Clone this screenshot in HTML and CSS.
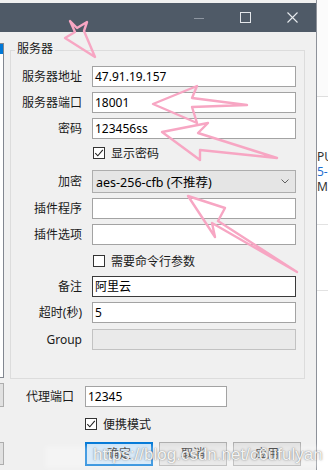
FILE: index.html
```html
<!DOCTYPE html>
<html lang="zh-CN">
<head>
    <meta charset="UTF-8">
    <meta name="viewport" content="width=device-width, initial-scale=1.0">
    <title>编辑服务器</title>
    <link rel="stylesheet" href="styles.css">
</head>
<body>
    <div class="screen">
        <div class="dialog">
            <div class="titlebar">
                <span class="tb-btn">
                    <svg width="10" height="10" viewBox="0 0 10 10"><line x1="0" y1="5.5" x2="10" y2="5.5" stroke="#8e96a1" stroke-width="1"/></svg>
                </span>
                <span class="tb-btn">
                    <svg width="11" height="11" viewBox="0 0 11 11"><rect x="0.5" y="0.5" width="10" height="10" fill="none" stroke="#e3e6ea" stroke-width="1"/></svg>
                </span>
                <span class="tb-btn">
                    <svg width="11" height="11" viewBox="0 0 11 11"><path d="M0.5 0.5 L10.5 10.5 M10.5 0.5 L0.5 10.5" stroke="#e8ebee" stroke-width="1.1"/></svg>
                </span>
            </div>

            <div class="dialog-body">
                <div class="left-col">
                    <div class="server-list"><div class="list-sel"></div></div>
                    <div class="left-btn first"></div>
                    <div class="left-btn second"></div>
                </div>

                <div class="main">
                    <div class="group">
                        <div class="group-title">服务器</div>

                        <div class="row first">
                            <span class="label">服务器地址</span>
                            <div class="field">47.91.19.157</div>
                        </div>
                        <div class="row">
                            <span class="label">服务器端口</span>
                            <div class="field">18001</div>
                        </div>
                        <div class="row">
                            <span class="label">密码</span>
                            <div class="field">123456ss</div>
                        </div>
                        <div class="check-row in-group">
                            <span class="checkbox">
                                <svg width="10" height="10" viewBox="0 0 10 10"><path d="M1.3 5.2 L3.8 7.8 L8.8 1.8" fill="none" stroke="#222" stroke-width="1.1"/></svg>
                            </span>
                            <span>显示密码</span>
                        </div>
                        <div class="row combo-row">
                            <span class="label">加密</span>
                            <div class="combo">
                                <span>aes-256-cfb (不推荐)</span>
                                <svg width="8" height="5" viewBox="0 0 8 5"><polyline points="0.5,0.5 4,4 7.5,0.5" fill="none" stroke="#606060" stroke-width="1"/></svg>
                            </div>
                        </div>
                        <div class="row">
                            <span class="label">插件程序</span>
                            <div class="field"></div>
                        </div>
                        <div class="row">
                            <span class="label">插件选项</span>
                            <div class="field"></div>
                        </div>
                        <div class="check-row in-group second">
                            <span class="checkbox"></span>
                            <span>需要命令行参数</span>
                        </div>
                        <div class="row after-check">
                            <span class="label">备注</span>
                            <div class="field focused">阿里云</div>
                        </div>
                        <div class="row">
                            <span class="label">超时(秒)</span>
                            <div class="field">5</div>
                        </div>
                        <div class="row last">
                            <span class="label">Group</span>
                            <div class="field disabled"></div>
                        </div>
                    </div>

                    <div class="row proxy">
                        <span class="label">代理端口</span>
                        <div class="field">12345</div>
                    </div>
                    <div class="check-row portable">
                        <span class="checkbox">
                            <svg width="10" height="10" viewBox="0 0 10 10"><path d="M1.3 5.2 L3.8 7.8 L8.8 1.8" fill="none" stroke="#222" stroke-width="1.1"/></svg>
                        </span>
                        <span>便携模式</span>
                    </div>
                    <div class="buttons">
                        <div class="btn default">确定</div>
                        <div class="btn">取消</div>
                        <div class="btn">应用</div>
                    </div>
                </div>
            </div>
        </div>

        <div class="side">
            <div class="side-head"></div>
            <div class="side-text">
                <div>PU</div>
                <div class="blue">5-</div>
                <div>Mb</div>
            </div>
            <div class="side-line one"></div>
            <div class="side-line two"></div>
        </div>
    </div>

    <!-- hand drawn arrows on top of the screenshot -->
    <svg class="marks" width="328" height="475" viewBox="0 0 328 475">
        <g fill="none" stroke="#f7a6c3" stroke-width="2.4" stroke-linejoin="round" stroke-linecap="round">
            <polygon points="70,21 77,28 87,22 84,31 95,57 65,38 75,32"/>
            <polygon points="153,104 197,86 192,98 247,105 192,107 197,123"/>
            <polygon points="162,132 208,123 198,133 277,158 200,150 200,160"/>
            <polygon points="188,196 225,208 218,221 297,272 212,223 215,237"/>
        </g>
    </svg>

    <div class="wm-band"></div>
    <div class="watermark">https://blog.csdn.net/c6ufulyan</div>
</body>
</html>
```

FILE: styles.css
```css
* {
    box-sizing: border-box;
}

body {
    margin: 0;
    padding: 0;
    width: 328px;
    height: 475px;
    overflow: hidden;
    position: relative;
    background: #ffffff;
    font-family: "Noto Sans", "Noto Sans CJK SC", sans-serif;
    font-size: 12px;
    color: #1a1a1a;
}

.screen {
    display: flex;
    height: 470px;
}

/* the settings window */
.dialog {
    width: 317px;
    padding-top: 3px;
    border-right: 1px solid #8d9199;
    background: #f0f0f0;
    display: flex;
    flex-direction: column;
}

.titlebar {
    height: 29px;
    background: #4f5a67;
    display: flex;
    justify-content: flex-end;
}

.tb-btn {
    width: 47px;
    height: 29px;
    display: flex;
    align-items: center;
    justify-content: center;
}

.dialog-body {
    flex: 1;
    display: flex;
}

/* cut off server list on the left */
.left-col {
    width: 4px;
}

.server-list {
    margin-top: 11px;
    height: 335px;
    background: #ffffff;
    border: 1px solid #828790;
    border-left: none;
}

.list-sel {
    width: 3px;
    height: 10px;
    background: #0078d7;
}

.left-btn {
    height: 24px;
    background: #e1e1e1;
    border: 1px solid #adadad;
    border-left: none;
}

.left-btn.first {
    margin-top: 5px;
}

.left-btn.second {
    margin-top: 35px;
    height: 23px;
}

.main {
    flex: 1;
}

.group {
    width: 295px;
    margin: 18px 0 0 6px;
    padding: 0 8px 28px 6px;
    border: 1px solid #dcdcdc;
}

.group-title {
    width: fit-content;
    margin: -10px 0 0 -2px;
    padding: 0 2px;
    line-height: 16px;
    background: #f0f0f0;
}

.row {
    display: flex;
    align-items: center;
    height: 21px;
    margin-top: 5px;
}

.row.first {
    margin-top: 9px;
}

.row.combo-row {
    height: 23px;
    margin-top: 8px;
}

.row.after-check {
    margin-top: 6px;
}

.row.last {
    margin-top: 6px;
}

.label {
    width: 65px;
    margin-right: 10px;
    text-align: right;
    white-space: nowrap;
    line-height: 21px;
}

.field {
    width: 204px;
    height: 21px;
    padding: 0 2px;
    border: 1px solid #a3a3a3;
    background: #ffffff;
    color: #000000;
    line-height: 19px;
    white-space: nowrap;
}

.field.focused {
    border-color: #3a3a3a;
}

.field.disabled {
    background: #eaeaea;
    border-color: #c2c2c2;
}

.combo {
    width: 204px;
    height: 23px;
    padding: 0 6px 0 3px;
    border: 1px solid #adadad;
    background: #e5e5e5;
    color: #000000;
    font-size: 12.5px;
    display: flex;
    align-items: center;
    justify-content: space-between;
}

.check-row {
    display: flex;
    align-items: center;
    height: 18px;
}

.check-row.in-group {
    margin: 5px 0 0 76px;
}

.check-row.in-group.second {
    margin-top: 7px;
}

.checkbox {
    width: 12px;
    height: 12px;
    margin-right: 6px;
    border: 1px solid #333333;
    background: #ffffff;
    display: flex;
    align-items: center;
    justify-content: center;
}

/* below the group box */
.row.proxy {
    margin: 7px 0 0 6px;
}

.row.proxy .label {
    width: 64px;
    margin-right: 11px;
}

.row.proxy .field {
    width: 142px;
}

.check-row.portable {
    margin: 8px 0 0 81px;
}

.buttons {
    display: flex;
    gap: 6px;
    margin: 9px 0 0 81px;
}

.btn {
    width: 68px;
    height: 24px;
    border: 1px solid #adadad;
    background: #e1e1e1;
    text-align: center;
    line-height: 22px;
}

.btn.default {
    border: 2px solid #0078d7;
    background: #cce4f7;
    line-height: 20px;
}

/* window behind, on the right */
.side {
    flex: 1;
    background: #ffffff;
    overflow: hidden;
}

.side-head {
    height: 97px;
    background: #fbfbfb;
    border-bottom: 1px solid #dedede;
}

.side-text {
    margin-top: 52px;
    line-height: 15px;
    color: #333333;
    white-space: nowrap;
}

.side-text .blue {
    color: #1e6fd0;
}

.side-line {
    height: 1px;
    background: #e2e2e2;
}

.side-line.one {
    margin-top: 30px;
}

.side-line.two {
    margin-top: 65px;
}

/* annotations over the screenshot */
.marks {
    position: absolute;
    left: 0;
    top: 0;
    pointer-events: none;
}

.wm-band {
    position: absolute;
    left: 45px;
    top: 446px;
    width: 275px;
    height: 22px;
    background: rgba(255, 255, 255, 0.28);
    filter: blur(2px);
}

.watermark {
    position: absolute;
    left: 93px;
    top: 445px;
    font-family: "Liberation Sans", Arial, sans-serif;
    font-size: 17px;
    color: rgba(255, 255, 255, 0.92);
    text-shadow: 0 0 1px rgba(90, 90, 90, 0.7), 0 0 3px rgba(0, 0, 0, 0.25);
    white-space: nowrap;
}
```
